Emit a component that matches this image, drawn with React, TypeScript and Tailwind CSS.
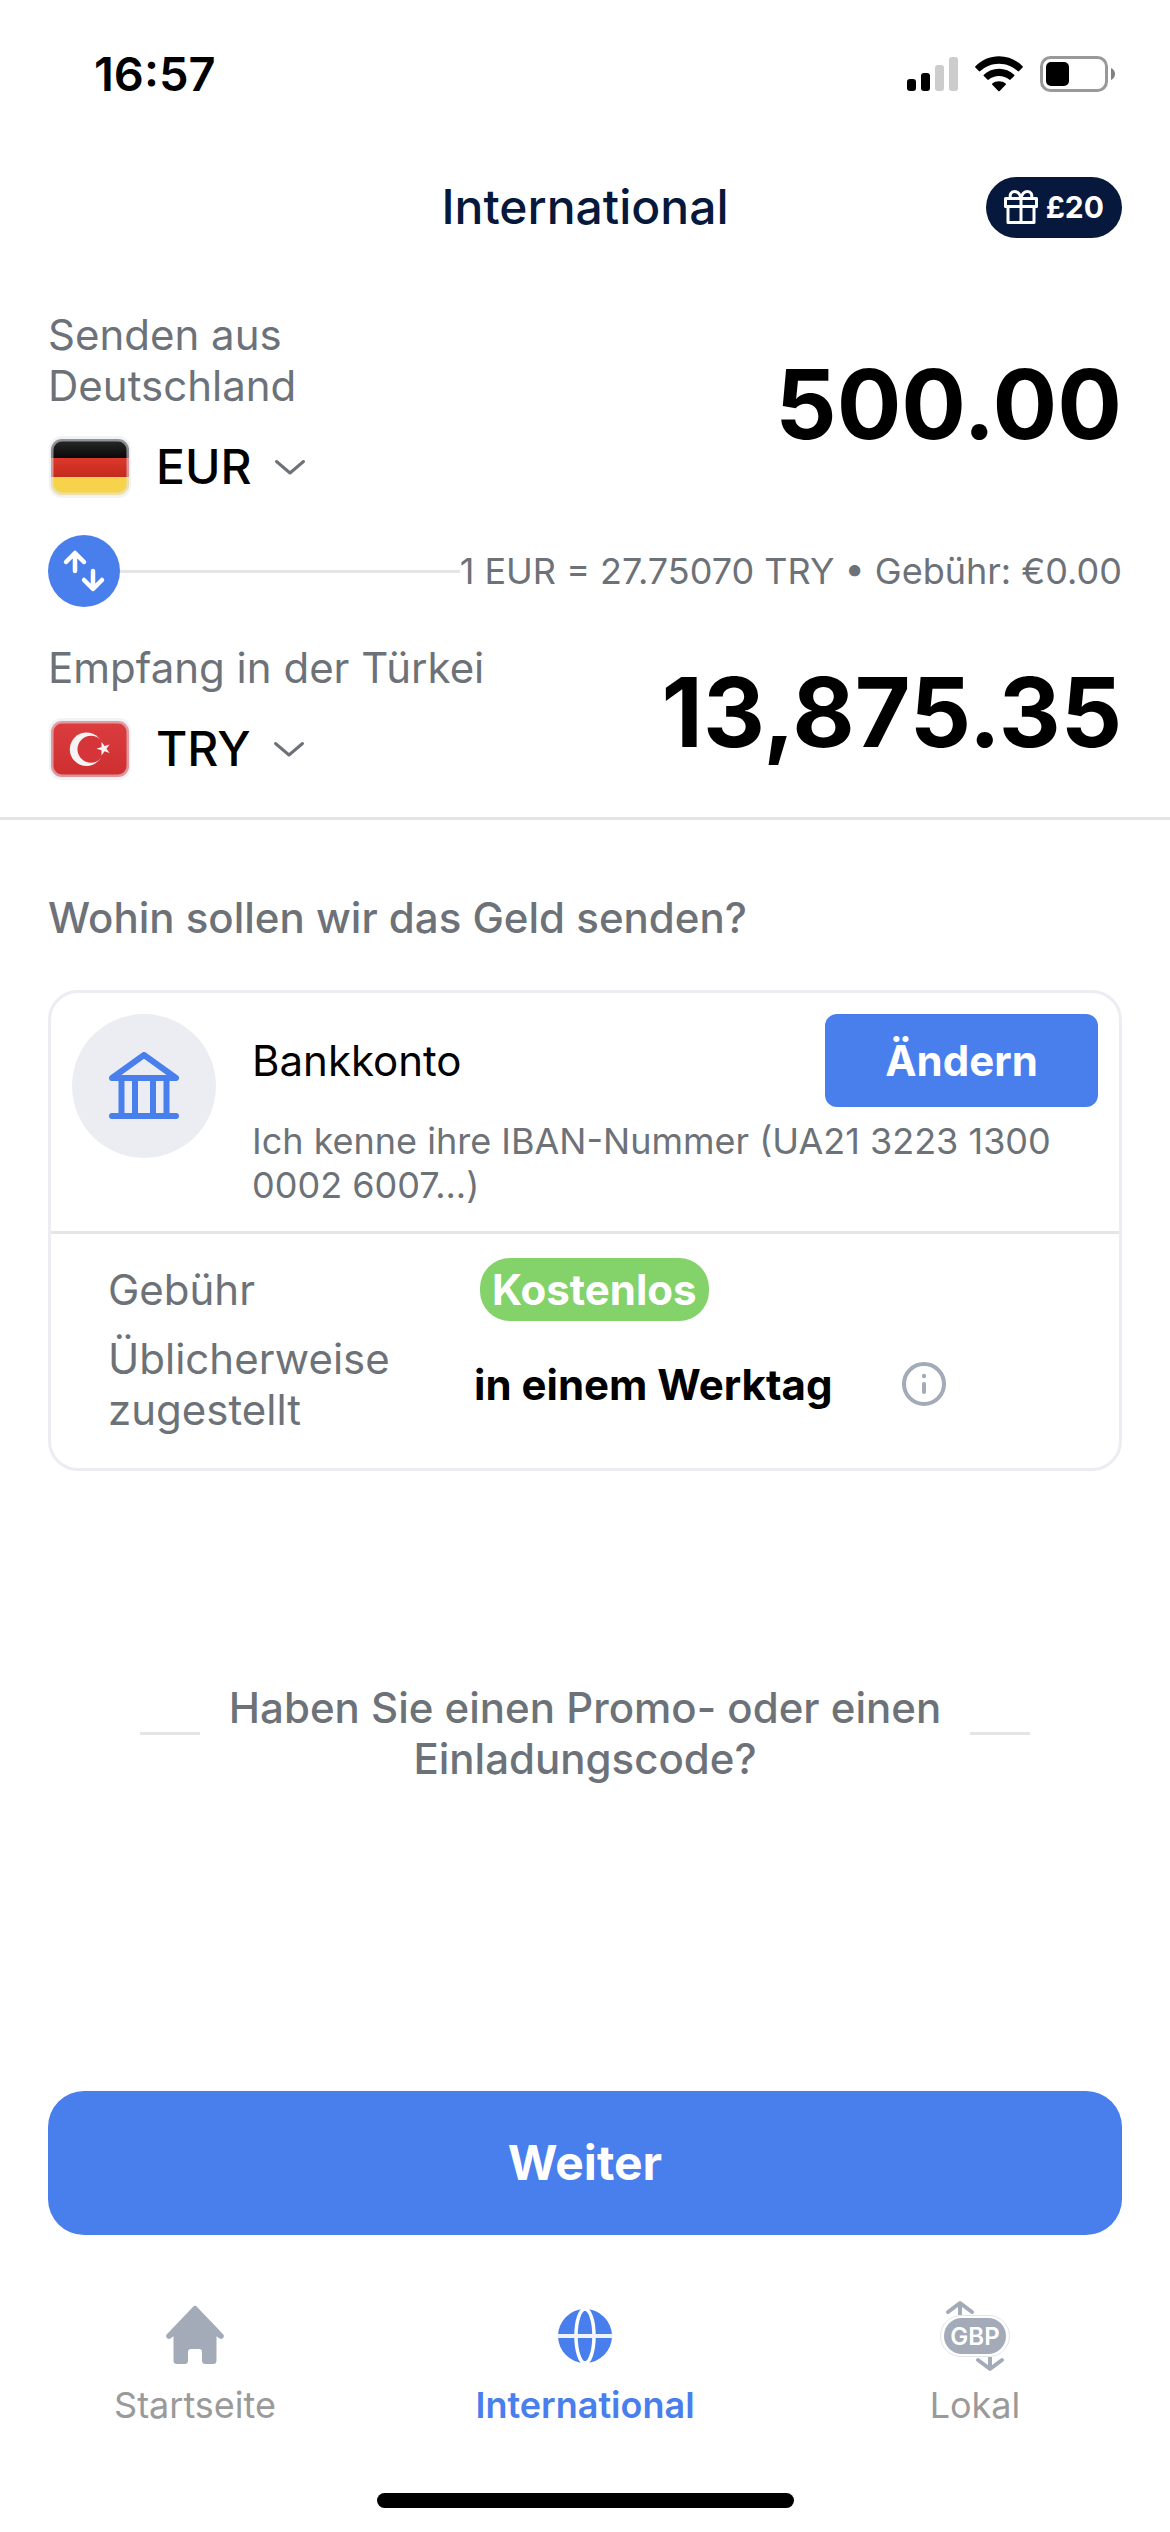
import { useState } from "react";

const RATE = 27.7507;

const formatAmount = (value: number) =>
  value.toLocaleString("en-US", { minimumFractionDigits: 2, maximumFractionDigits: 2 });

/* ── Icons ── */

const SignalIcon = () => (
  <svg width="51" height="34" viewBox="0 0 51 34" aria-hidden="true">
    <rect x="0" y="22" width="9" height="12" rx="3" fill="#000" />
    <rect x="14" y="16" width="9" height="18" rx="3" fill="#000" />
    <rect x="28" y="8" width="9" height="26" rx="3" fill="#ccc" />
    <rect x="42" y="0" width="9" height="34" rx="3" fill="#ccc" />
  </svg>
);

const WifiIcon = () => (
  <svg width="48" height="36" viewBox="0 0 48 36" aria-hidden="true">
    <path d="M.4 10.2C6.800 3.900 15 .3 24 .3s17.200 3.600 23.600 9.900c.4.4.4 1 0 1.400l-3.500 3.500c-.4.4-1 .4-1.400 0C37.700 10.400 31.100 7.700 24 7.700S10.300 10.400 5.300 15.100c-.4.4-1 .4-1.400 0L.4 11.600c-.4-.4-.4-1 0-1.400z" />
    <path d="M8.800 18.700C12.900 15 18.200 12.700 24 12.700s11.100 2.300 15.200 6c.4.4.4 1 0 1.400l-3.600 3.500c-.4.4-1 .4-1.400 0C31.400 21.300 27.900 20 24 20s-7.400 1.300-10.200 3.600c-.4.4-1 .4-1.400 0l-3.600-3.500c-.4-.4-.4-1 0-1.400z" />
    <path d="M17.300 27.400C19.200 26 21.500 25.200 24 25.200s4.800.8 6.700 2.200c.4.4.4 1 0 1.400l-6 6.100c-.4.4-1 .4-1.400 0l-6-6.100c-.4-.4-.4-1 0-1.400z" />
  </svg>
);

const BatteryIcon = () => (
  <svg width="75" height="36" viewBox="0 0 75 36" aria-hidden="true">
    <rect x="1.500" y="1.500" width="65" height="33" rx="9" fill="none" stroke="#999" strokeWidth="3" />
    <rect x="6" y="6" width="23" height="24" rx="5" />
    <path d="M71 12c2.500 1 4 3.400 4 6s-1.500 5-4 6z" fill="#808080" />
  </svg>
);

const GiftIcon = () => (
  <svg width="34" height="34" viewBox="0 0 34 34" fill="none" stroke="#fff" strokeWidth="3" strokeLinejoin="round" aria-hidden="true">
    <rect x="1.500" y="8.500" width="31" height="8" />
    <path d="M4 17v15.500h26V17M17 8.500v24" />
    <path d="M17 8C16 4 14 1.500 10.500 1.500S5.500 4.500 6.500 8M17 8c1-4 3-6.500 6.500-6.500s5 3 4 6.500" />
  </svg>
);

const ChevronIcon = () => (
  <svg width="36" height="36" viewBox="0 0 36 36" fill="none" stroke="#6d7278" strokeWidth="3" strokeLinecap="round" strokeLinejoin="round" aria-hidden="true">
    <path d="M4.500 12.500 18 24l13.500-11.500" />
  </svg>
);

const SwapIcon = () => (
  <svg width="72" height="72" viewBox="0 0 72 72" fill="none" stroke="#fff" strokeWidth="4.500" strokeLinecap="round" strokeLinejoin="round" aria-hidden="true">
    <path d="M27 18.500V36M18 27l9-9 9 9M45 36v17.500M36 45l9 9 9-9" />
  </svg>
);

const BankIcon = () => (
  <svg width="70" height="68" viewBox="0 0 70 68" fill="none" stroke="#497eed" strokeWidth="6" strokeLinecap="round" strokeLinejoin="round" aria-hidden="true">
    <path d="M35 3 67 26H3zM3 64h64" />
    <path d="M12.500 26v36M26 26v36M44 26v36M57.500 26v36" strokeLinecap="butt" />
  </svg>
);

const InfoIcon = () => (
  <svg width="44" height="44" viewBox="0 0 44 44" fill="none" aria-hidden="true">
    <circle cx="22" cy="22" r="20" stroke="#a3aab8" strokeWidth="4" />
    <circle cx="22" cy="14" r="2.200" fill="#a3aab8" />
    <path d="M22 22v8" stroke="#a3aab8" strokeWidth="4" strokeLinecap="round" />
  </svg>
);

const HomeIcon = () => (
  <svg width="72" height="72" viewBox="-7 -6 72 72" fill="#a3aab8" aria-hidden="true">
    <path d="M26.900.9a3 3 0 0 1 4.200 0l26 27.300c2.400 2.600-1.200 6.200-3.900 4l-2.700-2V54.500a3.500 3.500 0 0 1-3.500 3.500h-7.500a3.500 3.500 0 0 1-3.500-3.500V46a3 3 0 0 0-3-3h-8a3 3 0 0 0-3 3v8.500a3.500 3.500 0 0 1-3.500 3.500H11a3.500 3.500 0 0 1-3.500-3.500V30.200l-2.700 2c-2.700 2.200-6.300-1.400-3.900-4z" />
  </svg>
);

const GlobeIcon = () => (
  <svg width="72" height="72" viewBox="0 0 72 72" fill="none" aria-hidden="true">
    <circle cx="36" cy="36" r="27" fill="#497eed" />
    <ellipse cx="36" cy="36" rx="9" ry="27" stroke="#fff" strokeWidth="3.500" />
    <path d="M8 36h56" stroke="#eef3fe" strokeWidth="4" />
  </svg>
);

const LocalIcon = () => (
  <svg width="72" height="72" viewBox="0 0 72 72" fill="none" aria-hidden="true">
    <g stroke="#a3aab8" strokeWidth="4" strokeLinecap="round" strokeLinejoin="round">
      <path d="M9 12 21 3l12 9M39 60l12 9 12-9" />
      <path d="M21 3v12M51 57v12" strokeLinecap="butt" />
    </g>
    <rect x="1.500" y="15.500" width="69" height="41" rx="20.500" fill="#fff" stroke="#e4e6ea" />
    <rect x="5" y="18" width="62" height="36" rx="18" fill="#a3aab8" />
    <text x="36" y="45" textAnchor="middle" fill="#fff" fontSize="24" fontWeight="600">
      GBP
    </text>
  </svg>
);

const FlagDE = () => (
  <svg width="84" height="72" viewBox="0 0 84 72" aria-hidden="true">
    <defs>
      <clipPath id="de-clip">
        <rect x="3" y="8" width="78" height="56" rx="11" />
      </clipPath>
      <linearGradient id="de-black" x1="0" y1="0" x2="0" y2="1">
        <stop offset="0" stopColor="#2b2b2b" />
        <stop offset="1" stopColor="#080808" />
      </linearGradient>
      <linearGradient id="de-red" x1="0" y1="0" x2="0" y2="1">
        <stop offset="0" stopColor="#dc382c" />
        <stop offset="1" stopColor="#c42a1b" />
      </linearGradient>
    </defs>
    <rect x="1" y="5" width="82" height="62" rx="13" fill="#f1f3f6" />
    <g clipPath="url(#de-clip)">
      <rect x="3" y="8" width="78" height="19" fill="url(#de-black)" />
      <rect x="3" y="27" width="78" height="19" fill="url(#de-red)" />
      <rect x="3" y="46" width="78" height="18" fill="#f7d24b" />
    </g>
    <rect x="4" y="9" width="76" height="54" rx="10" fill="none" stroke="#e8eaee" strokeOpacity=".55" strokeWidth="3" />
  </svg>
);

const FlagTR = () => (
  <svg width="84" height="72" viewBox="0 0 84 72" aria-hidden="true">
    <defs>
      <linearGradient id="tr-red" x1="0" y1="0" x2="0" y2="1">
        <stop offset="0" stopColor="#db3d40" />
        <stop offset="1" stopColor="#ce2e2f" />
      </linearGradient>
    </defs>
    <rect x="1" y="5" width="82" height="62" rx="13" fill="#f1f3f6" />
    <rect x="3" y="8" width="78" height="56" rx="11" fill="url(#tr-red)" />
    <circle cx="38.500" cy="36.300" r="16.700" fill="#f4f4f5" />
    <circle cx="43" cy="36.300" r="13.500" fill="#d53538" />
    <path
      d="M48.500 35.700l5-1.700v-5.200l3.100 4.200 5-1.600-3.100 4.300 3.100 4.200-5-1.600-3.100 4.200v-5.200z"
      fill="#f4f4f5"
    />
    <rect x="4" y="9" width="76" height="54" rx="10" fill="none" stroke="#e8eaee" strokeOpacity=".55" strokeWidth="3" />
  </svg>
);

/* ── Amount row ── */

type AmountRowProps = {
  id: string;
  label: string;
  currency: string;
  flag: React.ReactNode;
  value: string;
  onChange?: (value: string) => void;
};

function AmountRow({ id, label, currency, flag, value, onChange }: AmountRowProps) {
  return (
    <div className="flex items-center justify-between">
      <div className="w-[440px] shrink-0">
        <label htmlFor={id} className="block text-[42px] leading-[51px] text-[#6d7278]">
          {label}
        </label>
        <div className="mt-5 flex h-[72px] items-center">
          {flag}
          <select
            aria-label={`Währung: ${label}`}
            defaultValue={currency}
            className="ml-6 field-sizing-content appearance-none bg-transparent text-5xl font-medium text-black outline-none"
          >
            <option>{currency}</option>
          </select>
          <span className="pointer-events-none ml-5">
            <ChevronIcon />
          </span>
        </div>
      </div>
      <input
        id={id}
        type="text"
        inputMode="decimal"
        value={value}
        readOnly={!onChange}
        onChange={(e) => onChange?.(e.target.value)}
        className="min-w-0 flex-1 bg-transparent pb-1 text-right text-8xl font-bold text-black outline-none"
      />
    </div>
  );
}

const tabs = [
  { href: "#startseite", label: "Startseite", icon: HomeIcon, active: false },
  { href: "#international", label: "International", icon: GlobeIcon, active: true },
  { href: "#lokal", label: "Lokal", icon: LocalIcon, active: false },
];

export default function App() {
  const [amount, setAmount] = useState("500.00");
  const received = formatAmount((parseFloat(amount) || 0) * RATE);

  return (
    <div className="flex min-h-screen flex-col bg-white font-['Inter',sans-serif] text-black">
      {/* Status bar */}
      <div className="flex h-[148px] items-center justify-between pr-[55px] pl-[94px]">
        <span className="text-[47px] font-semibold">16:57</span>
        <div className="flex items-center gap-[17px]">
          <SignalIcon />
          <WifiIcon />
          <BatteryIcon />
        </div>
      </div>

      {/* Header */}
      <header className="grid h-[118px] grid-cols-[1fr_auto_1fr] items-center px-12">
        <h1 className="col-start-2 text-5xl font-medium text-[#06183b]">International</h1>
        <button className="flex h-[61px] items-center gap-2 justify-self-end rounded-full bg-[#06183b] px-[18px] text-[30px] font-bold text-white">
          <GiftIcon />
          £20
        </button>
      </header>

      {/* Amounts */}
      <section className="border-b-3 border-[#e5e5e5] px-12 pt-[43px] pb-8">
        <AmountRow
          id="send-amount"
          label="Senden aus Deutschland"
          currency="EUR"
          flag={<FlagDE />}
          value={amount}
          onChange={setAmount}
        />
        <div className="mt-8 flex items-center">
          <button aria-label="Währungen tauschen" className="size-[72px] shrink-0 rounded-full bg-[#497eed]">
            <SwapIcon />
          </button>
          <div className="h-[3px] flex-1 bg-[#e5e5e5]" />
          <p className="text-4xl text-[#6d7278]">1 EUR = 27.75070 TRY • Gebühr: €0.00</p>
        </div>
        <div className="mt-[35px]">
          <AmountRow id="receive-amount" label="Empfang in der Türkei" currency="TRY" flag={<FlagTR />} value={received} />
        </div>
      </section>

      <main className="flex flex-1 flex-col px-12 pt-[72px]">
        <h2 className="text-[42px] leading-[51px] font-medium text-[#6d7278]">Wohin sollen wir das Geld senden?</h2>

        {/* Delivery method */}
        <section className="mt-[47px] rounded-[30px] border-3 border-[#ecedf2]">
          <div className="flex gap-9 border-b-3 border-[#e5e5e5] px-[21px] pt-[21px] pb-6">
            <div className="flex size-36 shrink-0 items-center justify-center rounded-full bg-[#ecedf2]">
              <BankIcon />
            </div>
            <div className="flex-1">
              <div className="flex items-center justify-between">
                <h3 className="text-[42px] leading-[51px]">Bankkonto</h3>
                <button className="h-[93px] w-[273px] rounded-xl bg-[#497eed] text-[42px] font-bold text-white">
                  Ändern
                </button>
              </div>
              <p className="mt-3 text-4xl leading-[44px] text-[#6d7278]">
                Ich kenne ihre IBAN-Nummer (UA21 3223 1300 0002 6007...)
              </p>
            </div>
          </div>
          <dl className="grid grid-cols-[366px_1fr] items-center gap-y-3 px-[57px] pt-6 pb-[33px] text-[42px] leading-[51px]">
            <dt className="text-[#6d7278]">Gebühr</dt>
            <dd>
              <span className="ml-1.5 inline-flex h-[63px] items-center rounded-[30px] bg-[#84d26a] px-3 align-top font-bold text-white">
                Kostenlos
              </span>
            </dd>
            <dt className="text-[#6d7278]">Üblicherweise zugestellt</dt>
            <dd className="flex items-center gap-[70px] font-bold">
              in einem Werktag
              <button aria-label="Mehr Informationen">
                <InfoIcon />
              </button>
            </dd>
          </dl>
        </section>

        {/* Promo code */}
        <div className="mt-[211px] flex items-center gap-3 px-[92px]">
          <div className="h-[3px] w-[60px] shrink-0 bg-[#e5e5e5]" />
          <button className="flex-1 text-center text-[42px] leading-[51px] font-medium text-[#6d7278]">
            Haben Sie einen Promo- oder einen Einladungscode?
          </button>
          <div className="h-[3px] w-[60px] shrink-0 bg-[#e5e5e5]" />
        </div>

        <button className="mt-auto h-36 w-full rounded-[36px] bg-[#497eed] text-5xl font-bold text-white">Weiter</button>
      </main>

      {/* Tab bar */}
      <nav className="grid grid-cols-3 pt-[65px]">
        {tabs.map(({ href, label, icon: Icon, active }) => (
          <a
            key={href}
            href={href}
            aria-current={active ? "page" : undefined}
            className={`flex flex-col items-center gap-[11px] text-4xl leading-[44px] ${
              active ? "font-semibold text-[#497eed]" : "text-[#9a9a9a]"
            }`}
          >
            <Icon />
            {label}
          </a>
        ))}
      </nav>
      <div className="mx-auto mt-[66px] mb-6 h-[15px] w-[417px] rounded-full bg-black" />
    </div>
  );
}
